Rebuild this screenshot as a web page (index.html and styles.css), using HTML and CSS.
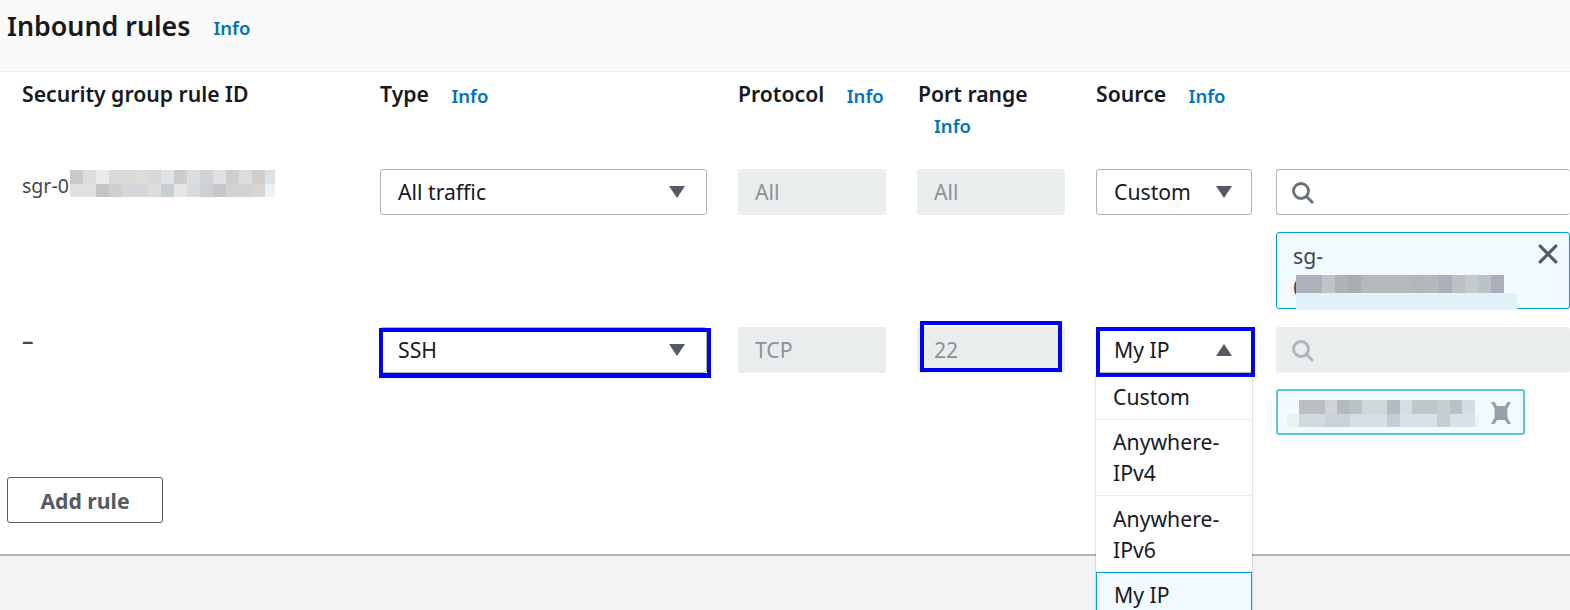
FILE: index.html
```html
<!DOCTYPE html>
<html lang="en">
<head>
<meta charset="utf-8">
<title>Inbound rules</title>
<link rel="stylesheet" href="styles.css">
</head>
<body>
<header class="panel-head">
  <h2 class="panel-title">Inbound rules</h2>
  <a class="info info-title">Info</a>
</header>
<main class="panel-body">
  <div class="rules">
    <div class="col-head">Security group rule ID</div>
    <div class="col-head">Type <a class="info">Info</a></div>
    <div class="col-head">Protocol <a class="info">Info</a></div>
    <div class="col-head col-port">Port range <a class="info info-wrap">Info</a></div>
    <div class="col-head">Source <a class="info">Info</a></div>
    <div class="col-head"></div>

    <div class="cell-id">sgr-0<span class="blur blur-id"></span></div>
    <div class="field select w-type">All traffic<svg class="caret" viewBox="0 0 16 12"><path d="M0 0h16L8 12z"/></svg></div>
    <div class="field disabled w-narrow">All</div>
    <div class="field disabled w-narrow">All</div>
    <div class="field select w-source">Custom<svg class="caret caret-source" viewBox="0 0 16 12"><path d="M0 0h16L8 12z"/></svg></div>
    <div class="source-col">
      <div class="field search"><svg class="search-icon" viewBox="0 0 24 24"><circle cx="10" cy="10" r="7.5"/><path d="M15.5 15.5 22 22"/></svg></div>
      <div class="token token-sg">
        <div class="token-text">sg-<br>0<span class="blur blur-sg"></span><span class="blur blur-sg-under"></span></div>
        <svg class="close" viewBox="0 0 20 20"><path d="M2 2l16 16M18 2 2 18"/></svg>
      </div>
    </div>

    <div class="cell-id cell-dash">–</div>
    <div class="field select w-type">SSH<svg class="caret" viewBox="0 0 16 12"><path d="M0 0h16L8 12z"/></svg><span class="mark mark-type"></span></div>
    <div class="field disabled w-narrow">TCP</div>
    <div class="field disabled w-narrow">22<span class="mark mark-port"></span></div>
    <div class="source-select w-source">
      <div class="field select">My IP<svg class="caret caret-source" viewBox="0 0 16 12"><path d="M0 12h16L8 0z"/></svg><span class="mark mark-source"></span></div>
      <ul class="menu">
        <li>Custom</li>
        <li>Anywhere-<br>IPv4</li>
        <li>Anywhere-<br>IPv6</li>
        <li class="selected">My IP</li>
      </ul>
    </div>
    <div class="source-col source-col-tight">
      <div class="field search disabled"><svg class="search-icon faint" viewBox="0 0 24 24"><circle cx="10" cy="10" r="7.5"/><path d="M15.5 15.5 22 22"/></svg></div>
      <div class="token token-ip">
        <span class="blur blur-ip"></span>
        <span class="blur-x"></span>
      </div>
    </div>
  </div>
  <button class="add-rule">Add rule</button>
</main>
<footer class="panel-foot"></footer>
</body>
</html>
```
FILE: styles.css
```css
* { box-sizing: border-box; }
html, body { margin: 0; height: 100%; }
body {
  width: 1570px;
  height: 610px;
  overflow: hidden;
  display: flex;
  flex-direction: column;
  font-family: "Noto Sans", sans-serif;
  font-size: 21.2px;
  color: #16191f;
  background: #fff;
}
.panel-head {
  height: 72px;
  flex: none;
  display: flex;
  align-items: flex-start;
  gap: 23px;
  padding: 8px 0 0 7px;
  background: #fafafa;
  border-bottom: 1px solid #eaeded;
}
.panel-title { margin: 0; font-size: 26.8px; line-height: 36px; font-weight: 600; }
.info { color: #0073bb; font-size: 18.5px; font-weight: 600; margin-left: 17px; vertical-align: -1px; }
.info-title { margin: 0; line-height: 40px; }
.panel-body { flex: 1; position: relative; min-height: 0; }
.rules {
  display: grid;
  grid-template-columns: 358px 358px 179px 179px 180px 294px;
  grid-template-rows: 97px 158px 150px;
  padding-left: 22px;
}
.col-head { font-size: 21.2px; font-weight: 600; line-height: 44px; white-space: nowrap; }
.col-port { line-height: 32px; padding: 6px 0 0 1px; }
.col-port .info-wrap { display: block; margin-left: 16px; line-height: 32px; }
.cell-id { padding-top: 2px; font-size: 19.5px; line-height: 30px; color: #414750; position: relative; }
.cell-dash { padding-top: 0; font-size: 23px; line-height: 26px; font-weight: 600; }
.blur { display: inline-block; }
.blur-id {
  position: absolute; left: 48px; top: 1px; width: 205px; height: 27px;
  background:
    linear-gradient(90deg, #c9cacb 0 13px, #dcdddd 13px 26px, #ebebeb 26px 39px, #d8d9db 39px 52px, #dbd9d6 52px 65px, #dcdcdc 65px 78px, #d6d7d9 78px 91px, #e0e4e7 91px 104px, #cdccc9 104px 117px, #d9dee2 117px 130px, #d0d2d5 130px 143px, #dee0e1 143px 156px, #cfcecf 156px 169px, #dadcdf 169px 182px, #d1cfce 182px 195px, #dde2e7 195px 205px) top/100% 14px no-repeat,
    linear-gradient(90deg, #dfe0df 0 26px, #c7c4c4 26px 39px, #cdd0d0 39px 52px, #d3d7da 52px 78px, #dbdcdc 78px 91px, #c8cfd3 91px 104px, #e5e7e8 104px 117px, #d8dbdd 117px 130px, #ced0d3 130px 143px, #c5c7cb 143px 156px, #d3d2d1 156px 169px, #d1d2d4 169px 182px, #d7d6d5 182px 195px, #eef1f6 195px 205px) bottom/100% 13px no-repeat;
}
.field {
  position: relative;
  height: 46px;
  display: flex;
  align-items: center;
  padding: 0 17px;
  border-radius: 3px;
  font-size: 21.2px;
  line-height: 30px;
}
.select {
  justify-content: space-between;
  background: #fff;
  border: 1px solid #aab7b8;
}
.disabled { background: #eaeded; color: #879596; }
.caret { width: 16px; height: 12px; flex: none; fill: #545b64; margin-right: 4px; }
.caret-source { margin-right: 2px; }
.w-type { width: 327px; }
.w-narrow { width: 148px; }
.w-source { width: 156px; }
.source-select { position: relative; }
.source-col { display: flex; flex-direction: column; gap: 17px; min-width: 0; }
.source-col-tight { gap: 16px; }
.search { padding-left: 14px; border: 1px solid #aab7b8; background: #fff; border-right: 0; }
.search.disabled { border: 0; background: #eaeded; padding-left: 15px; }
.search-icon { width: 24px; height: 24px; margin-top: 2px; fill: none; stroke: #687078; stroke-width: 2.8; }
.search-icon.faint { stroke: #aab7b8; }
.token {
  position: relative;
  background: #f1faff;
  border: 1px solid #00a1c9;
  border-radius: 3px;
}
.token-sg { height: 77px; width: 294px; padding: 7px 16px; line-height: 32px; color: #414750; }
.token-text { position: relative; }
.blur-sg {
  position: absolute; left: 3px; top: 35px; width: 208px; height: 18px;
  background: linear-gradient(90deg, #adb1b9 0 26px, #bfc5c7 26px 39px, #b0b3b6 39px 52px, #a9adb2 52px 65px, #b5b8bd 65px 117px, #b0b8b9 117px 130px, #b5b8bc 130px 143px, #acb0b8 143px 156px, #bcc0c5 156px 169px, #c3caca 169px 182px, #bcc3c5 182px 195px, #acafbb 195px 209px);
}
.blur-sg-under {
  position: absolute; left: 3px; top: 53px; width: 221px; height: 17px;
  background: #e0f1f9;
}
.close { position: absolute; right: 10px; top: 10px; width: 22px; height: 22px; fill: none; stroke: #545b64; stroke-width: 2.8; }
.token-ip { width: 249px; height: 46px; border: 2px solid #5cc6e0; }
.blur-ip {
  position: absolute; left: 9px; top: 9px; width: 192px; height: 27px;
  background:
    linear-gradient(90deg, #f1faff 0 12px, #b9bfc2 12px 38px, #cfd4d7 38px 50px, #b3bbc0 50px 63px, #bcc3c7 63px 75px, #d0d7d8 75px 100px, #b4bbc1 100px 113px, #d6dee3 113px 125px, #bfc7cb 125px 150px, #c7cfcf 150px 163px, #bac1c5 163px 175px, #d3dde3 175px 188px, #f1faff 188px) top/100% 14px no-repeat,
    linear-gradient(90deg, #ecf0ef 0 12px, #d1d9df 12px 38px, #c9d2d7 38px 63px, #d7dfe4 63px 100px, #c4ced0 100px 113px, #d8e1e7 113px 150px, #c5cdcf 150px 163px, #d8e1e7 163px 188px, #ecf2f6 188px) bottom/100% 13px no-repeat;
}
.blur-x {
  position: absolute; right: 12px; top: 11px; width: 20px; height: 22px;
  background: #9aa0a6;
  clip-path: polygon(0 0, 18% 0, 30% 18%, 70% 18%, 82% 0, 100% 0, 82% 30%, 82% 70%, 100% 100%, 82% 100%, 70% 82%, 30% 82%, 18% 100%, 0 100%, 18% 70%, 18% 30%);
}
.mark { position: absolute; border: 4px solid #0000f5; pointer-events: none; }
.mark-type { left: -2px; top: 0; width: 332px; height: 50px; border-bottom-width: 5px; }
.mark-port { left: 3px; top: -6px; width: 142px; height: 51px; }
.mark-source { left: -1px; top: -1px; width: 159px; height: 50px; }
.menu {
  position: absolute;
  left: 0; top: 50px; width: 156px;
  margin: 0; padding: 0;
  list-style: none;
  background: #fff;
  box-shadow: 0 0 2px rgba(100,110,120,.55);
  z-index: 2;
  line-height: 31px;
}
.menu li { padding: 4px 17px 7px; border-bottom: 1px solid #eaeded; }
.menu li:nth-child(n+2) { padding: 6px 17px 7px; }
.menu li:nth-child(3) { padding: 7px 17px 6px; }
.menu .selected { background: #f1faff; border: 1px solid #00a1c9; padding: 5px 16px 6px; height: 50px; }
.add-rule {
  position: absolute;
  left: 7px; top: 405px;
  width: 156px; height: 46px;
  background: #fff;
  border: 1px solid #545b64;
  border-radius: 3px;
  font: 700 21.2px "Noto Sans", sans-serif;
  color: #545b64;
}
.panel-foot { flex: none; height: 56px; background: #f2f3f3; border-top: 2px solid #aab7b8; }
```
